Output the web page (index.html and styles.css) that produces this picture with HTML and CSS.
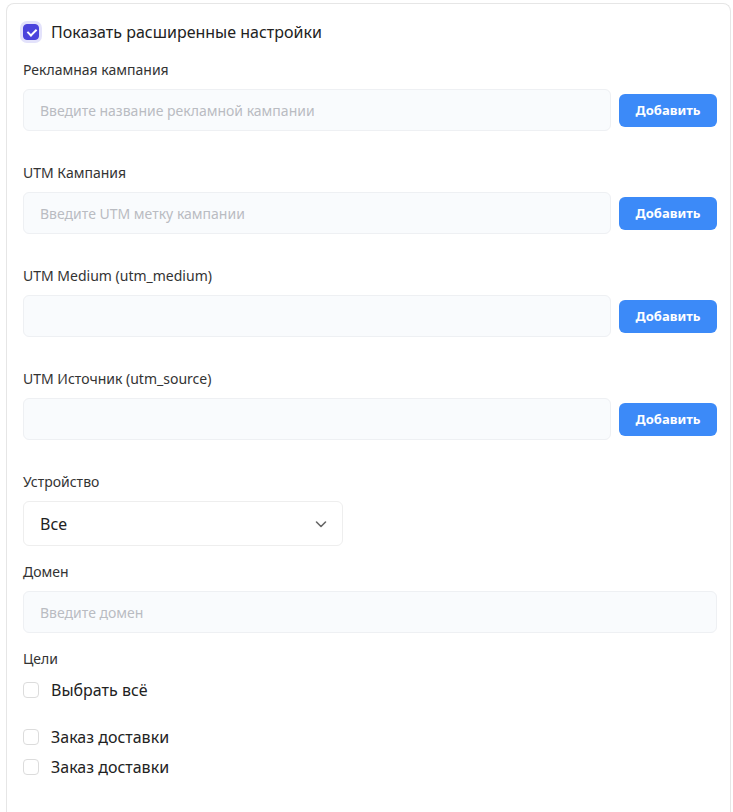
FILE: index.html
```html
<!DOCTYPE html>
<html>
  <head>
    <meta charset="utf-8">
    <title>Настройки</title>
    <link rel="stylesheet" href="styles.css">
  </head>
  <body>
    <div class="card">
      <label class="check check-main">
        <input type="checkbox" checked>
        <span class="box"></span>
        <span>Показать расширенные настройки</span>
      </label>

      <div class="field">
        <div class="label">Рекламная кампания</div>
        <div class="row">
          <input class="input" placeholder="Введите название рекламной кампании">
          <button class="btn">Добавить</button>
        </div>
      </div>

      <div class="field">
        <div class="label">UTM Кампания</div>
        <div class="row">
          <input class="input" placeholder="Введите UTM метку кампании">
          <button class="btn">Добавить</button>
        </div>
      </div>

      <div class="field">
        <div class="label">UTM Medium (utm_medium)</div>
        <div class="row">
          <input class="input">
          <button class="btn">Добавить</button>
        </div>
      </div>

      <div class="field">
        <div class="label">UTM Источник (utm_source)</div>
        <div class="row">
          <input class="input">
          <button class="btn">Добавить</button>
        </div>
      </div>

      <div class="field field-tight">
        <div class="label">Устройство</div>
        <div class="select">
          <span>Все</span>
          <svg width="14" height="14" viewBox="0 0 14 14"><path d="M2.5 5 L7 9.5 L11.5 5" fill="none" stroke="#666" stroke-width="1.6" stroke-linecap="round" stroke-linejoin="round"/></svg>
        </div>
      </div>

      <div class="field field-tight">
        <div class="label">Домен</div>
        <input class="input input-full" placeholder="Введите домен">
      </div>

      <div class="goals">
        <div class="label">Цели</div>
        <label class="check check-all">
          <input type="checkbox">
          <span class="box"></span>
          <span>Выбрать всё</span>
        </label>
        <label class="check">
          <input type="checkbox">
          <span class="box"></span>
          <span>Заказ доставки</span>
        </label>
        <label class="check">
          <input type="checkbox">
          <span class="box"></span>
          <span>Заказ доставки</span>
        </label>
      </div>
    </div>
  </body>
</html>
```

FILE: styles.css
```css
* { box-sizing: border-box; }
body {
  margin: 0;
  font-family: "Noto Sans", "Lato", sans-serif;
  color: #222;
  background: #fff;
}
.card {
  margin: 3px 2px 0 6px;
  padding: 18px 13px 40px 16px;
  border: 1px solid #e6e6e6;
  border-bottom: 0;
  border-radius: 8px 8px 0 0;
  min-height: 809px;
}

/* checkboxes */
.check {
  display: flex;
  align-items: center;
  gap: 12px;
  font-size: 16px;
  line-height: 20px;
  color: #222;
  cursor: pointer;
}
.check input { display: none; }
.check .box {
  width: 16px;
  height: 16px;
  flex: none;
  border: 1px solid #dcdcdc;
  border-radius: 4px;
  background: #fff;
  position: relative;
}
.check input:checked + .box {
  background: #4b44dc;
  border-color: #4b44dc;
  box-shadow: 0 0 0 3px #e3e2fb;
}
.check input:checked + .box::after {
  content: "";
  position: absolute;
  left: 5px;
  top: 2px;
  width: 4px;
  height: 7px;
  border: solid #fff;
  border-width: 0 2px 2px 0;
  transform: rotate(45deg);
}
.check-main {
  margin-bottom: 18px;
}

/* fields */
.label {
  font-size: 14px;
  line-height: 20px;
  color: #333;
  margin-bottom: 9px;
}
.field {
  margin-bottom: 32px;
}
.field-tight {
  margin-bottom: 16px;
}
.row {
  display: flex;
  align-items: center;
  gap: 8px;
}
.input {
  flex: 1;
  height: 42px;
  padding: 0 16px;
  border: 1px solid #eef0f3;
  border-radius: 6px;
  background: #f9fbfd;
  font: inherit;
  font-size: 14px;
  color: #222;
  outline: none;
}
.input::placeholder { color: #b9bcc2; }
.input-full {
  display: block;
  width: 100%;
}
.btn {
  width: 98px;
  height: 33px;
  border: 0;
  border-radius: 6px;
  background: #3c8af8;
  color: #fff;
  font: inherit;
  font-size: 13px;
  font-weight: 700;
  cursor: pointer;
}
.select {
  width: 320px;
  height: 45px;
  display: flex;
  align-items: center;
  justify-content: space-between;
  padding: 0 14px 0 16px;
  border: 1px solid #eeeeee;
  border-radius: 6px;
  font-size: 16px;
  color: #222;
}

/* goals */
.goals .label {
  margin-bottom: 11px;
}
.goals .check {
  margin-bottom: 10px;
}
.goals .check-all {
  margin-bottom: 27px;
}
```
